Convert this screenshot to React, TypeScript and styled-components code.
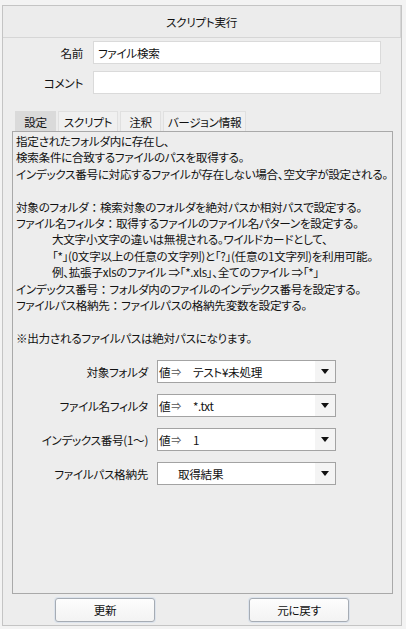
import React from "react";
import styled, { createGlobalStyle } from "styled-components";

const GlobalStyle = createGlobalStyle`
  html, body {
    margin: 0;
    padding: 0;
    background: #f3f3f3;
  }
  body {
    font-family: "Noto Sans CJK JP", "Noto Sans", sans-serif;
    font-size: 11.6px;
    letter-spacing: -0.3px;
    color: #111;
    font-feature-settings: "palt";
  }
  * { box-sizing: border-box; }
`;

const Panel = styled.div`
  margin: 5px 0 0 2px;
  width: 400px;
  height: 621px;
  border: 1px solid #c4c4c4;
  background: #ededed;
  display: flex;
  flex-direction: column;
`;

const Header = styled.div`
  height: 32px;
  flex: none;
  display: flex;
  align-items: center;
  justify-content: center;
  background: #ececec;
  border-bottom: 1px solid #d6d6d6;
  border-right: 1px solid #d6d6d6;
`;

const Body = styled.div`
  flex: 1;
  display: flex;
  flex-direction: column;
  padding: 0 8px 0 9px;
  min-height: 0;
`;

const FieldRow = styled.div<{ $top: number }>`
  display: flex;
  align-items: center;
  margin-top: ${(p) => p.$top}px;
  height: 23px;
`;

const FieldLabel = styled.div`
  width: 71px;
  text-align: right;
  margin-right: 10px;
`;

const TextInput = styled.div`
  width: 288px;
  height: 23px;
  background: #fff;
  border: 1px solid #dadada;
  padding-left: 4px;
  display: flex;
  align-items: center;
`;

const Tabs = styled.div`
  display: flex;
  gap: 2px;
  margin-top: 17px;
  padding-left: 3px;
  height: 20px;
`;

const Tab = styled.div<{ $active?: boolean; $w: number }>`
  width: ${(p) => p.$w}px;
  height: 20px;
  display: flex;
  align-items: center;
  justify-content: center;
  white-space: nowrap;
  background: ${(p) => (p.$active ? "#dadada" : "#f0f0f0")};
  border: 1px solid ${(p) => (p.$active ? "#dadada" : "#e0e0e0")};
  border-bottom: none;
`;

const TabPanel = styled.div`
  flex: 1;
  border: 1px solid #a9a9a9;
  padding: 1px 3px 0;
  display: flex;
  flex-direction: column;
  min-height: 0;
`;

const Description = styled.div`
  white-space: nowrap;
`;

const Line = styled.div<{ $indent?: boolean }>`
  height: 16.4px;
  line-height: 16.4px;
  padding-left: ${(p) => (p.$indent ? "36px" : "0")};
`;

const Colon = styled.span`
  font-feature-settings: normal;
  letter-spacing: 0;
`;

const Form = styled.div`
  margin-top: 14px;
  display: grid;
  grid-template-columns: 132px 179px;
  column-gap: 9px;
  row-gap: 11px;
  grid-auto-rows: 23px;
  align-items: center;
`;

const FormLabel = styled.div`
  text-align: right;
  white-space: nowrap;
`;

const Select = styled.div`
  height: 23px;
  background: #fff;
  border: 1px solid #a3a3a3;
  display: flex;
  align-items: stretch;
`;

const SelectValue = styled.div<{ $plain?: boolean }>`
  flex: 1;
  display: flex;
  align-items: center;
  padding-left: ${(p) => (p.$plain ? "20px" : "1px")};
  white-space: nowrap;
`;

const Prefix = styled.span`
  width: 34px;
  flex: none;
  display: inline-flex;
  align-items: center;
`;

const Arrow = styled.span`
  font-size: 10px;
  color: #555;
  margin-left: 1px;
`;

const DropButton = styled.div`
  width: 20px;
  flex: none;
  background: #f4f4f4;
  display: flex;
  align-items: center;
  justify-content: center;
`;

const ButtonBar = styled.div`
  flex: none;
  display: flex;
  justify-content: center;
  gap: 94px;
  padding: 4px 0 3px;
`;

const Button = styled.button`
  width: 100px;
  height: 24px;
  font: inherit;
  letter-spacing: inherit;
  color: #111;
  background: linear-gradient(#fdfdfd, #f3f3f3);
  border: 1px solid #a6acb4;
  border-radius: 3px;
  box-shadow: 0 0 0 1px rgba(190, 210, 235, 0.35);
  padding: 0;
`;

const Triangle = () => (
  <svg width="8" height="5" viewBox="0 0 8 5">
    <path d="M0 0 H8 L4 5 Z" fill="#111" />
  </svg>
);

type Row = { label: string; prefix: boolean; value: string };

const rows: Row[] = [
  { label: "対象フォルダ", prefix: true, value: "テスト¥未処理" },
  { label: "ファイル名フィルタ", prefix: true, value: "*.txt" },
  { label: "インデックス番号(1〜)", prefix: true, value: "1" },
  { label: "ファイルパス格納先", prefix: false, value: "取得結果" },
];

const tabs = [
  { label: "設定", w: 41, active: true },
  { label: "スクリプト", w: 60 },
  { label: "注釈", w: 41 },
  { label: "バージョン情報", w: 83 },
];

const lines: { text: string; indent?: boolean }[] = [
  { text: "指定されたフォルダ内に存在し、" },
  { text: "検索条件に合致するファイルのパスを取得する。" },
  { text: "インデックス番号に対応するファイルが存在しない場合、空文字が設定される。" },
  { text: "" },
  { text: "対象のフォルダ：検索対象のフォルダを絶対パスか相対パスで設定する。" },
  { text: "ファイル名フィルタ：取得するファイルのファイル名パターンを設定する。" },
  { text: "大文字小文字の違いは無視される。ワイルドカードとして、", indent: true },
  { text: "「*」(0文字以上の任意の文字列)と「?」(任意の1文字列)を利用可能。", indent: true },
  { text: "例、拡張子xlsのファイル ⇒「*.xls」、全てのファイル ⇒「*」", indent: true },
  { text: "インデックス番号：フォルダ内のファイルのインデックス番号を設定する。" },
  { text: "ファイルパス格納先：ファイルパスの格納先変数を設定する。" },
  { text: "" },
  { text: "※出力されるファイルパスは絶対パスになります。" },
];

const renderLine = (text: string) => {
  const parts = text.split("：");
  return parts.map((p, i) => (
    <React.Fragment key={i}>
      {p}
      {i < parts.length - 1 && <Colon>：</Colon>}
    </React.Fragment>
  ));
};

export default function App() {
  return (
    <>
      <GlobalStyle />
      <Panel>
        <Header>スクリプト実行</Header>
        <Body>
          <FieldRow $top={3}>
            <FieldLabel>名前</FieldLabel>
            <TextInput>ファイル検索</TextInput>
          </FieldRow>
          <FieldRow $top={7}>
            <FieldLabel>コメント</FieldLabel>
            <TextInput />
          </FieldRow>
          <Tabs>
            {tabs.map((t) => (
              <Tab key={t.label} $active={t.active} $w={t.w}>
                {t.label}
              </Tab>
            ))}
          </Tabs>
          <TabPanel>
            <Description>
              {lines.map((l, i) => (
                <Line key={i} $indent={l.indent}>
                  {renderLine(l.text)}
                </Line>
              ))}
            </Description>
            <Form>
              {rows.map((r) => (
                <React.Fragment key={r.label}>
                  <FormLabel>{r.label}</FormLabel>
                  <Select>
                    <SelectValue $plain={!r.prefix}>
                      {r.prefix && (
                        <Prefix>
                          値<Arrow>⇒</Arrow>
                        </Prefix>
                      )}
                      {r.value}
                    </SelectValue>
                    <DropButton>
                      <Triangle />
                    </DropButton>
                  </Select>
                </React.Fragment>
              ))}
            </Form>
          </TabPanel>
        </Body>
        <ButtonBar>
          <Button>更新</Button>
          <Button>元に戻す</Button>
        </ButtonBar>
      </Panel>
    </>
  );
}
